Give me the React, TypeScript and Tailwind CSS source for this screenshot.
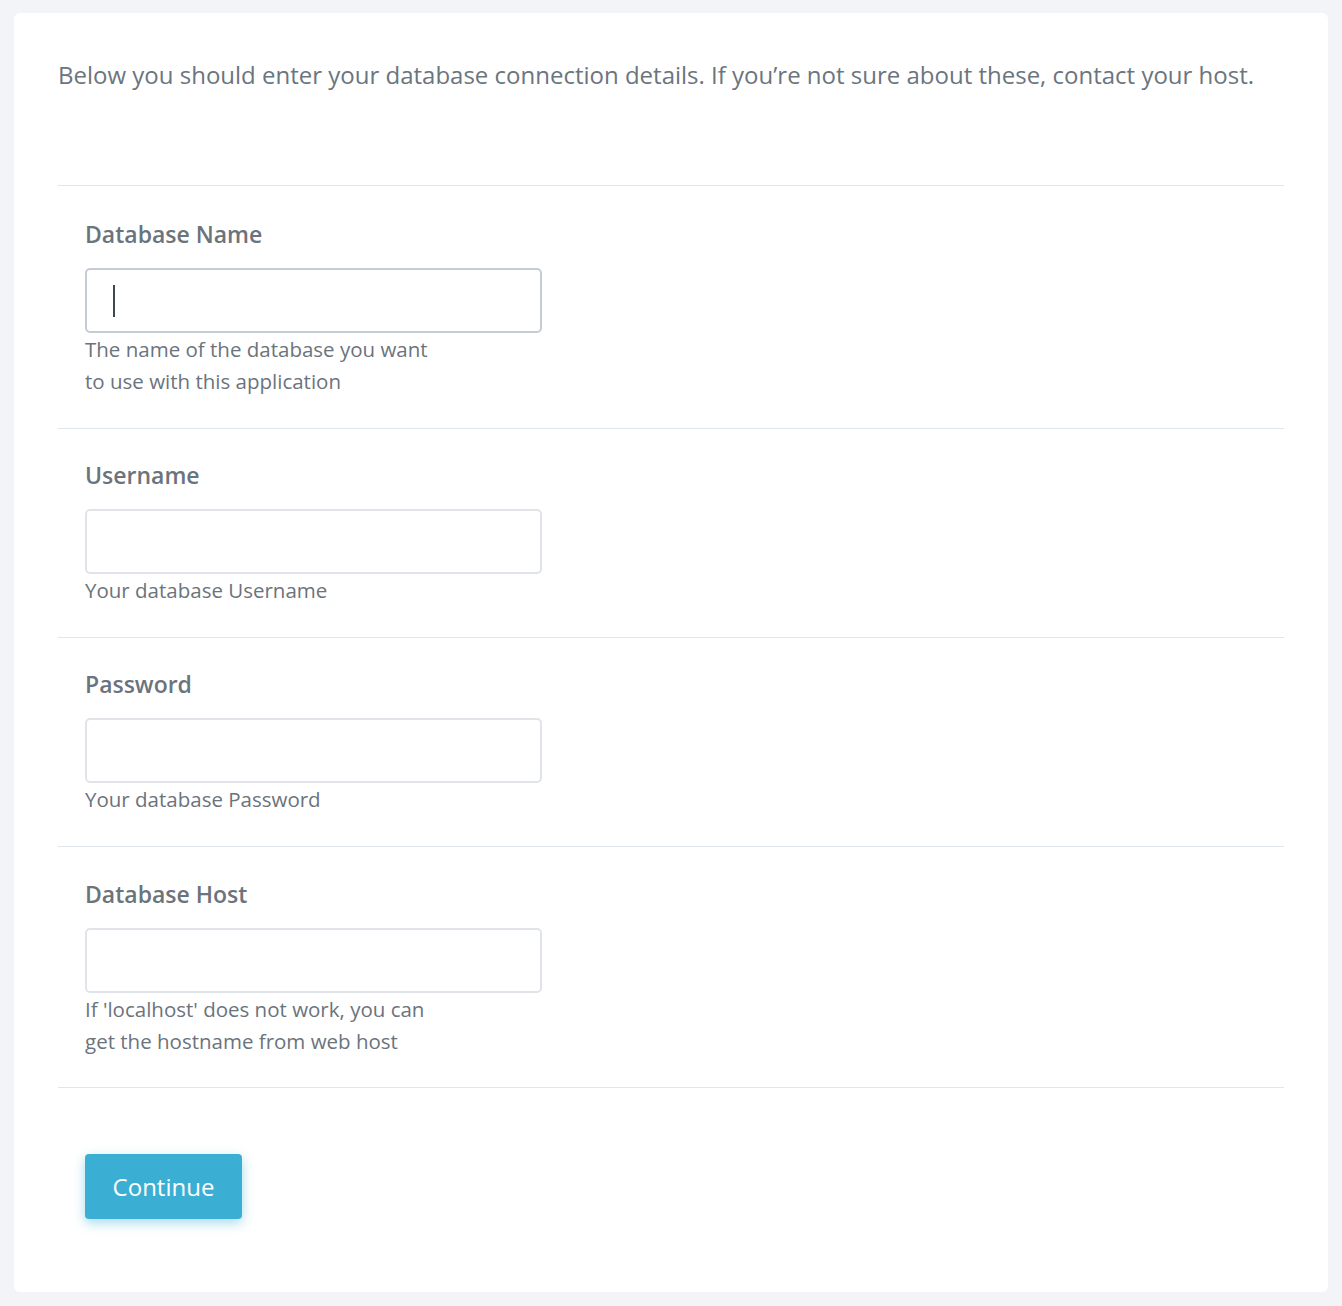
import React from "react";

const fields = [
  { label: "Database Name", help: ["The name of the database you want", "to use with this application"], focused: true, pad: "pt-[34px] pb-[31px]" },
  { label: "Username", help: ["Your database Username"], focused: false, pad: "pt-[32px] pb-[31px]" },
  { label: "Password", help: ["Your database Password"], focused: false, pad: "pt-[32px] pb-[31px]" },
  { label: "Database Host", help: ["If 'localhost' does not work, you can", "get the hostname from web host"], focused: false, pad: "pt-[33px] pb-[30px]" },
];

export default function App() {
  return (
    <div className="min-h-[1306px] bg-[#f3f4f8] px-[14px] pt-[13px] pb-[15px] font-['Open_Sans',sans-serif] text-[#6b757e]">
      <div className="rounded-md bg-white px-[44px] pt-[48px] pb-[73px]">
        <p className="whitespace-nowrap text-[24px] leading-[28px]">
          Below you should enter your database connection details. If you’re not sure about these, contact your host.
        </p>

        <div className="mt-[96px] border-t border-[#e1e6ec]">
          {fields.map((f) => (
            <div key={f.label} className={"border-b border-[#e1e6ec] pl-[27px] " + f.pad}>
              <label className="block text-[23px] font-semibold leading-[28px] text-[#6b737c]">{f.label}</label>
              <div
                className={
                  "mt-[20px] flex h-[65px] w-[457px] items-center rounded-[5px] border-2 bg-white px-[26px] " +
                  (f.focused ? "border-[#c5ccd3]" : "border-[#e0e4e9]")
                }
              >
                {f.focused && <span className="h-[32px] w-[2px] bg-[#3f4750]" />}
              </div>
              <div className="text-[20.5px] leading-[32px] text-[#6b737c]">
                {f.help.map((line) => (
                  <div key={line}>{line}</div>
                ))}
              </div>
            </div>
          ))}
        </div>

        <div className="mt-[66px] pl-[27px]">
          <button className="h-[65px] w-[157px] rounded-[4px] bg-[#3aafd3] text-[24px] text-white shadow-[0_4px_12px_rgba(58,175,211,0.45)]">
            Continue
          </button>
        </div>
      </div>
    </div>
  );
}
